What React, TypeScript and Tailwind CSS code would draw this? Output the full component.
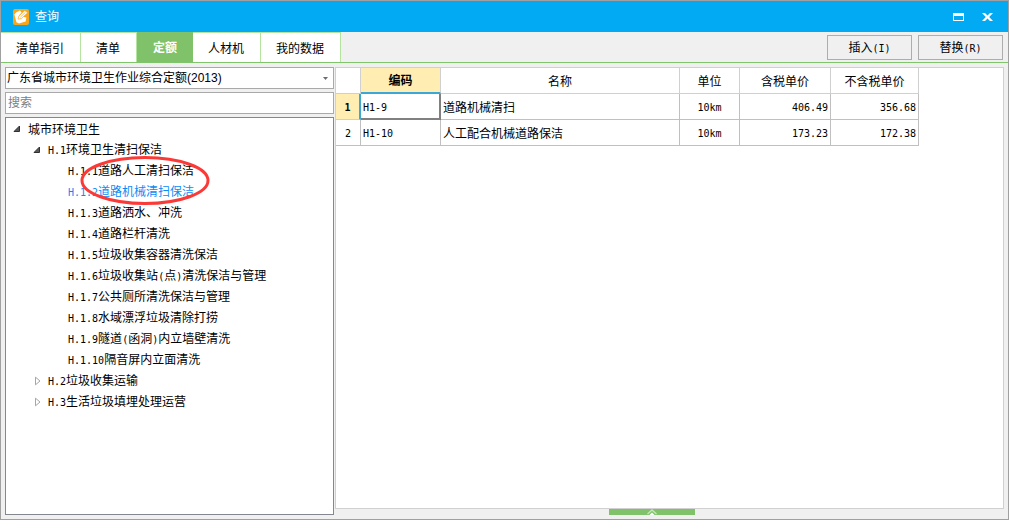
import { useState } from 'react';

type TreeNode = {
  id: string;
  label: string;
  children?: TreeNode[];
};

type Quota = {
  code: string;
  name: string;
  unit: string;
  taxedPrice: string;
  untaxedPrice: string;
};

const TABS = ['清单指引', '清单', '定额', '人材机', '我的数据'];

const TREE: TreeNode[] = [
  {
    id: 'H',
    label: '城市环境卫生',
    children: [
      {
        id: 'H.1',
        label: 'H.1环境卫生清扫保洁',
        children: [
          { id: 'H.1.1', label: 'H.1.1道路人工清扫保洁' },
          { id: 'H.1.2', label: 'H.1.2道路机械清扫保洁' },
          { id: 'H.1.3', label: 'H.1.3道路洒水、冲洗' },
          { id: 'H.1.4', label: 'H.1.4道路栏杆清洗' },
          { id: 'H.1.5', label: 'H.1.5垃圾收集容器清洗保洁' },
          { id: 'H.1.6', label: 'H.1.6垃圾收集站(点)清洗保洁与管理' },
          { id: 'H.1.7', label: 'H.1.7公共厕所清洗保洁与管理' },
          { id: 'H.1.8', label: 'H.1.8水域漂浮垃圾清除打捞' },
          { id: 'H.1.9', label: 'H.1.9隧道(函洞)内立墙壁清洗' },
          { id: 'H.1.10', label: 'H.1.10隔音屏内立面清洗' },
        ],
      },
      { id: 'H.2', label: 'H.2垃圾收集运输', children: [] },
      { id: 'H.3', label: 'H.3生活垃圾填埋处理运营', children: [] },
    ],
  },
];

const QUOTAS: Quota[] = [
  { code: 'H1-9', name: '道路机械清扫', unit: '10km', taxedPrice: '406.49', untaxedPrice: '356.68' },
  { code: 'H1-10', name: '人工配合机械道路保洁', unit: '10km', taxedPrice: '173.23', untaxedPrice: '172.38' },
];

// Half-width characters are set in a mono face, two of them to one Chinese character
function Mixed({ text }: { text: string }) {
  return (
    <>
      {text.split(/([\x20-\x7e]+)/).filter(Boolean).map((part, i) =>
        /^[\x20-\x7e]/.test(part) ? (
          <span key={i} className="font-['DejaVu_Sans_Mono',monospace] text-[10px]">{part}</span>
        ) : (
          part
        )
      )}
    </>
  );
}

function AppIcon() {
  return (
    <svg className="h-4 w-4" viewBox="0 0 16 16" aria-hidden="true">
      <rect width="16" height="16" rx="2" fill="#f9a61a" />
      <path d="M1.4 5.6 3 3.4 7 1.6 8.6 3.4 6 6.6 5.2 9.4 7.4 10 10.4 7.8 13.4 8.4 12.6 12.4 6 14.6 3.4 13.2Z" fill="#fff" />
      <path d="M5 10.2 6 7 11.8 1.4 14.6 3.8 8.4 9.6Z" fill="#fff" stroke="#f9a61a" strokeWidth="0.6" />
      <path d="M7.4 8.2 12.4 3.4" stroke="#f9b84a" strokeWidth="0.8" />
    </svg>
  );
}

function TitleBar() {
  return (
    <header className="flex h-[31px] shrink-0 items-center bg-[#02a9f3] pl-3 pr-[15px] text-white">
      <AppIcon />
      <h1 className="ml-1.5 flex-1">查询</h1>
      <button type="button" aria-label="最大化" className="mr-[18px]">
        <svg className="h-2 w-[11px]" viewBox="0 0 11 8">
          <path d="M0 0h11v8H0zM1 3v4h9V3z" fill="currentColor" fillRule="evenodd" />
        </svg>
      </button>
      <button type="button" aria-label="关闭">
        <svg className="h-2 w-[11px]" viewBox="0 0 11 8">
          <path d="M0 0h3l2.5 2.6L8 0h3L7.2 4 11 8H8L5.5 5.4 3 8H0l3.8-4z" fill="currentColor" />
        </svg>
      </button>
    </header>
  );
}

function TreeItem({
  node,
  depth,
  selected,
  onSelect,
}: {
  node: TreeNode;
  depth: number;
  selected: string;
  onSelect: (id: string) => void;
}) {
  const [open, setOpen] = useState(!!node.children?.length);

  return (
    <li role="treeitem" aria-selected={selected === node.id} aria-expanded={node.children ? open : undefined}>
      <div className="flex h-[21px] items-center" style={{ paddingLeft: depth * 20 }}>
        <div className="flex w-[22px] justify-center">
          {node.children && (
            <button type="button" aria-label="展开/折叠" onClick={() => setOpen(!open)}>
              {open ? (
                <svg className="h-2 w-2" viewBox="0 0 8 8">
                  <path d="M6.5 1v5.5H1z" fill="#595959" stroke="#303030" />
                </svg>
              ) : (
                <svg className="h-2.5 w-2" viewBox="0 0 8 10">
                  <path d="M2.5 1.2v7.6L7 5z" fill="#fff" stroke="#a6a6a6" />
                </svg>
              )}
            </button>
          )}
        </div>
        <button
          type="button"
          onClick={() => onSelect(node.id)}
          className={selected === node.id ? 'whitespace-nowrap pt-0.5 text-[#0b8cf5]' : 'whitespace-nowrap pt-0.5'}
        >
          <Mixed text={node.label} />
        </button>
      </div>
      {open && !!node.children?.length && (
        <ul role="group">
          {node.children.map((child) => (
            <TreeItem key={child.id} node={child} depth={depth + 1} selected={selected} onSelect={onSelect} />
          ))}
        </ul>
      )}
    </li>
  );
}

function QuotaTable() {
  const head = 'border-b border-r border-[#d0d0d0] pt-0.5 font-normal';
  const cell = 'border-b border-r border-[#c0c0c0] pt-0.5';

  return (
    <table className="table-fixed border-separate border-spacing-0">
      <colgroup>
        <col className="w-[25px]" />
        <col className="w-20" />
        <col className="w-[239px]" />
        <col className="w-15" />
        <col className="w-[91px]" />
        <col className="w-22" />
      </colgroup>
      <thead>
        <tr className="h-[26px]">
          <td className={head} />
          <th className="border-b-2 border-r border-b-[#3ba7d6] border-r-[#d0d0d0] bg-[#ffedb2] pt-0.5 font-bold">编码</th>
          <th className={head}>名称</th>
          <th className={head}>单位</th>
          <th className={head}>含税单价</th>
          <th className={head}>不含税单价</th>
        </tr>
      </thead>
      <tbody>
        {QUOTAS.map((quota, i) => (
          <tr key={quota.code} className="h-[26px]">
            <th
              className={
                i === 0
                  ? 'border-b border-r-2 border-b-[#d0d0d0] border-r-[#3ba7d6] bg-[#ffedb2] pt-0.5 font-bold'
                  : 'border-b border-r border-[#c0c0c0] pt-0.5 font-normal'
              }
            >
              <Mixed text={String(i + 1)} />
            </th>
            <td className={i === 0 ? 'border-b-2 border-r-2 border-[#808080] pl-0.5 pt-0.5' : `${cell} pl-0.5`}>
              <Mixed text={quota.code} />
            </td>
            <td className={`${cell} pl-0.5`}>{quota.name}</td>
            <td className={`${cell} text-center`}>
              <Mixed text={quota.unit} />
            </td>
            <td className={`${cell} pr-0.5 text-right`}>
              <Mixed text={quota.taxedPrice} />
            </td>
            <td className={`${cell} pr-0.5 text-right`}>
              <Mixed text={quota.untaxedPrice} />
            </td>
          </tr>
        ))}
      </tbody>
    </table>
  );
}

export default function App() {
  const [tab, setTab] = useState('定额');
  const [selected, setSelected] = useState('H.1.2');
  const [search, setSearch] = useState('');

  return (
    <div className="flex min-h-screen flex-col border border-[#a0a0a0] bg-[#f0f0f0] font-['Liberation_Sans','Noto_Sans_CJK_SC',sans-serif] text-xs leading-4 text-black">
      <TitleBar />

      <div className="flex h-[31px] shrink-0 items-stretch justify-between border-b border-[#80c56b]">
        <div role="tablist" className="flex">
          {TABS.map((name) => (
            <button
              key={name}
              type="button"
              role="tab"
              aria-selected={tab === name}
              onClick={() => setTab(name)}
              className={
                tab === name
                  ? 'bg-[#80c269] px-4 pt-0.5 font-bold text-white'
                  : 'border-r border-t border-[#b5e3a0] bg-white pl-[15px] pr-4 pt-0.5'
              }
            >
              {name}
            </button>
          ))}
        </div>
        <div className="flex items-center gap-1.5 pr-[5px]">
          <button type="button" className="h-[25px] w-[85px] border border-[#adadad] bg-[#f0f0f0] pt-0.5">
            <Mixed text="插入(I)" />
          </button>
          <button type="button" className="h-[25px] w-[85px] border border-[#adadad] bg-[#f0f0f0] pt-0.5">
            <Mixed text="替换(R)" />
          </button>
        </div>
      </div>

      <main className="flex flex-1 gap-px pb-1 pl-1 pr-1 pt-1">
        <section className="flex w-[329px] shrink-0 flex-col gap-[3px]">
          <div className="relative h-[22px]">
            <select
              aria-label="定额库"
              className="h-full w-full appearance-none border border-[#a9a9a9] bg-white pl-px pr-5 text-xs outline-none"
            >
              <option>广东省城市环境卫生作业综合定额(2013)</option>
            </select>
            <svg className="pointer-events-none absolute right-1.5 top-2.5 h-[3px] w-[5px]" viewBox="0 0 5 3">
              <path d="M0 0h5L2.5 3z" fill="#6b6b78" />
            </svg>
          </div>
          <input
            type="text"
            aria-label="搜索"
            placeholder="搜索"
            value={search}
            onChange={(event) => setSearch(event.target.value)}
            className="h-[22px] border border-[#a9a9a9] bg-white px-0.5 text-xs outline-none placeholder:text-[#808080]"
          />
          <div className="relative flex-1 border border-[#828790] bg-white">
            <ul role="tree">
              {TREE.map((node) => (
                <TreeItem key={node.id} node={node} depth={0} selected={selected} onSelect={setSelected} />
              ))}
            </ul>
            <svg className="pointer-events-none absolute left-[74px] top-9 h-[52px] w-[132px]" viewBox="0 0 132 52">
              <ellipse cx="65" cy="26.5" rx="63" ry="23" fill="none" stroke="#fb3a38" strokeWidth="3" />
            </svg>
          </div>
        </section>

        <section className="flex min-w-0 flex-1 flex-col">
          <div className="flex-1 overflow-hidden border border-[#d0d0d0] bg-white">
            <QuotaTable />
          </div>
          <div className="flex h-1.5 justify-center pr-9">
            <button type="button" aria-label="展开" className="flex h-1.5 w-[86px] justify-center bg-[#80c269]">
              <svg className="h-1.5 w-2.5" viewBox="0 0 10 6">
                <path d="M0.5 5 5 1l4.5 4" fill="none" stroke="#c5e6b8" strokeWidth="1.4" />
                <path d="M2.5 6 5 3.4 7.5 6z" fill="#fff" />
              </svg>
            </button>
          </div>
        </section>
      </main>
    </div>
  );
}
